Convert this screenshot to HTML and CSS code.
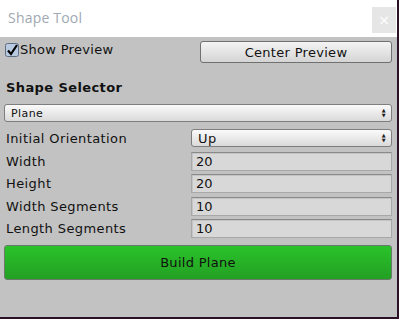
FILE: index.html
```html
<!DOCTYPE html>
<html>
<head>
<meta charset="utf-8">
<link rel="stylesheet" href="styles.css">
</head>
<body>
<div class="window">
  <div class="titlebar">
    <span class="title">Shape Tool</span>
    <span class="close">×</span>
  </div>
  <div class="panel">
    <div class="toprow">
      <label class="check">
        <svg class="box" width="14" height="14" viewBox="0 0 14 14">
          <rect x="0.5" y="0.5" width="13" height="13" rx="2" fill="#b9c9e0" stroke="#5e6e84"/>
          <path d="M3 7.5 L6 11 L12 2" fill="none" stroke="#000" stroke-width="2.2"/>
        </svg>
        <span>Show Preview</span>
      </label>
      <button class="btn">Center Preview</button>
    </div>
    <div class="section">Shape Selector</div>
    <div class="select wide"><span>Plane</span><span class="arrows">&#9650;<br>&#9660;</span></div>
    <div class="row first">
      <span class="label">Initial Orientation</span>
      <div class="select field"><span class="big">Up</span><span class="arrows">&#9650;<br>&#9660;</span></div>
    </div>
    <div class="row second"><span class="label">Width</span><div class="input">20</div></div>
    <div class="row tight"><span class="label">Height</span><div class="input">20</div></div>
    <div class="row"><span class="label">Width Segments</span><div class="input">10</div></div>
    <div class="row tight"><span class="label">Length Segments</span><div class="input">10</div></div>
    <button class="build">Build Plane</button>
  </div>
</div>
</body>
</html>
```
FILE: styles.css
```css
html, body {
  margin: 0;
  padding: 0;
  background: #2b1127;
  width: 399px;
  height: 319px;
  overflow: hidden;
}
.window {
  width: 397px;
  height: 317px;
  display: flex;
  flex-direction: column;
  font-family: "DejaVu Sans", sans-serif;
  color: #111;
}
.titlebar {
  height: 37px;
  background: #fff;
  display: flex;
  align-items: center;
  justify-content: space-between;
  padding: 0 1px 0 8px;
}
.title {
  font-family: "Open Sans", sans-serif;
  font-size: 14px;
  color: #a0a8b2;
  margin-top: -2px;
  letter-spacing: 0.2px;
}
.close {
  width: 24px;
  height: 26px;
  background: #e6e6e6;
  color: #fff;
  font-size: 14px;
  display: flex;
  align-items: center;
  justify-content: center;
  margin-top: 3px;
}
.panel {
  flex: 1;
  background: #c2c2c2;
  padding: 4px 5px 0 4px;
  display: flex;
  flex-direction: column;
}
.toprow {
  display: flex;
  justify-content: space-between;
  align-items: flex-start;
  height: 22px;
}
.check {
  display: flex;
  align-items: center;
  font-size: 13px;
  margin-top: 1px;
  letter-spacing: 0.3px;
}
.box { margin: 0 1px 0 1px; }
.btn {
  width: 192px;
  height: 22px;
  border: 1px solid #707070;
  border-radius: 3px;
  background: linear-gradient(#f4f4f4, #d4d4d4);
  font-family: "DejaVu Sans", sans-serif;
  font-size: 13px;
  color: #111;
  padding: 0;
  letter-spacing: 0.3px;
}
.section {
  font-weight: bold;
  font-size: 13px;
  margin: 17px 0 0 2px;
  height: 18px;
  letter-spacing: 0.4px;
}
.select {
  height: 18px;
  box-sizing: border-box;
  border: 1px solid #7e7e7e;
  border-radius: 3px;
  background: linear-gradient(#fafafa, #dadada);
  display: flex;
  align-items: center;
  justify-content: space-between;
  padding: 0 5px 0 6px;
  font-size: 11px;
  letter-spacing: 0.4px;
}
.select.wide { margin-top: 6px; }
.arrows {
  font-size: 5px;
  line-height: 5px;
  text-align: center;
  color: #222;
}
.big { font-size: 13px; }
.row {
  display: flex;
  align-items: center;
  justify-content: space-between;
  height: 19px;
  margin-top: 4px;
}
.row.first { margin-top: 7px; height: 18px; }
.row.second { margin-top: 5px; }
.row.tight { margin-top: 3px; }
.label {
  font-size: 13px;
  margin-left: 2px;
  letter-spacing: 0.4px;
}
.field {
  width: 201px;
  box-sizing: border-box;
}
.input {
  width: 201px;
  height: 19px;
  box-sizing: border-box;
  border: 1px solid #a8a8a8;
  border-top-color: #8a8a8a;
  background: #d8d8d8;
  box-shadow: inset 1px 1px 0 #c4c4c4;
  font-size: 13px;
  padding-left: 4px;
  line-height: 17px;
}
.build {
  margin-top: 7px;
  height: 35px;
  border: 1px solid #6a7a6a;
  border-radius: 3px;
  background: linear-gradient(#2ac32a, #23a023);
  font-family: "DejaVu Sans", sans-serif;
  font-size: 13px;
  color: #111;
  padding: 0;
  letter-spacing: 0.3px;
}
```
